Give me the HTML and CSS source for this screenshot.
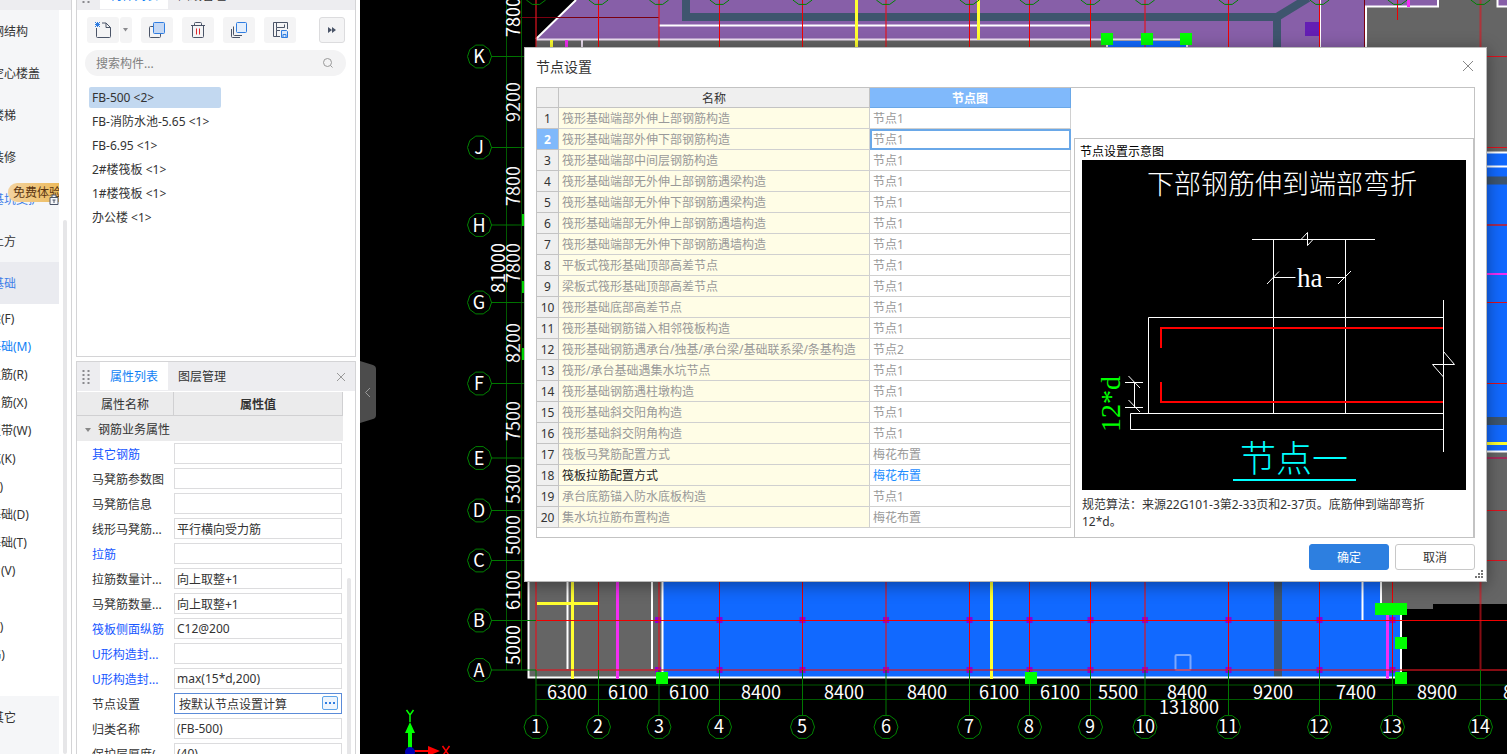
FILE: index.html
```html
<!DOCTYPE html>
<html lang="zh-CN">
<head>
    <meta charset="UTF-8">
    <meta name="viewport" content="width=device-width, initial-scale=1.0">
    <title>节点设置</title>
    <link rel="stylesheet" href="styles.css">
</head>
<body>
<div class="app">

    <nav class="nav">
        <div class="nav-top"></div>
        <ul class="nav-list">
            <li class="nav-group">钢结构</li>
            <li class="nav-group">空心楼盖</li>
            <li class="nav-group">楼梯</li>
            <li class="nav-group">装修</li>
            <li class="nav-group trial">基坑支护
                <span class="trial-badge">免费体验</span>
                <svg class="lock" width="10" height="11" viewBox="0 0 10 11"><path d="M1 3.500h8v7H1zM3 3.500V1h4v2.500" fill="#f5f6f8" stroke="#4b5568"/><path d="M3.500 6h3M5 6v3" stroke="#4b5568"/></svg>
            </li>
            <li class="nav-group">土方</li>
            <li class="nav-group current">基础</li>
        </ul>
        <ul class="nav-sub">
            <li>基础梁(F)</li>
            <li class="on">筏板基础(M)</li>
            <li>筏板主筋(R)</li>
            <li>筏板负筋(X)</li>
            <li>基础板带(W)</li>
            <li>集水坑(K)</li>
            <li>柱墩(Y)</li>
            <li>独立基础(D)</li>
            <li>条形基础(T)</li>
            <li>桩承台(V)</li>
            <li>桩(U)</li>
            <li>垫层(X)</li>
            <li>地沟(G)</li>
        </ul>
        <ul class="nav-list">
            <li class="nav-group">其它</li>
        </ul>
        <div class="nav-scroll"></div>
    </nav>

    <div class="side">
        <section class="panel panel-components">
            <header class="tabs">
                <svg class="grip" width="8" height="16" viewBox="0 0 8 16"><path d="M1.500 1v14M6.500 1v14" stroke="#8a8a8e" stroke-width="2" stroke-dasharray="2 2"/></svg>
                <button class="tab active">构件列表</button>
                <button class="tab">图纸管理</button>
                <button class="tab-close" aria-label="关闭"><svg width="10" height="10" viewBox="0 0 10 10"><path d="M1 1l8 8M9 1l-8 8" stroke="#999"/></svg></button>
            </header>
            <div class="toolbar">
                <button class="tool" aria-label="新建">
                    <svg width="18" height="18" viewBox="0 0 18 18" fill="none" stroke="#4b5568"><path d="M2.500 7v8.500q0 1 1 1h12q1 0 1-1V6.500L12 2H8M12 2v4.500h4.500"/><path d="M1 1l5 5M6 1L1 6M3.500 1v5M1 3.500h5" stroke="#2f7de1"/></svg>
                </button>
                <button class="tool tool-arrow" aria-label="更多新建"><svg width="6" height="4" viewBox="0 0 6 4"><path d="M0 0h5L2.500 3.500z" fill="#8a8a8e"/></svg></button>
                <button class="tool" aria-label="复制">
                    <svg width="18" height="18" viewBox="0 0 18 18" fill="none"><rect x="1.500" y="5.500" width="11" height="11" rx="1" stroke="#4b5568"/><rect x="5.500" y="1.500" width="11" height="11" rx="1" fill="#c5d8f4" stroke="#2f7de1"/></svg>
                </button>
                <button class="tool" aria-label="删除">
                    <svg width="18" height="18" viewBox="0 0 18 18" fill="none" stroke="#4b5568"><path d="M2 4.500h14M5.500 4.500v-2q0-1 1-1h5q1 0 1 1v2M3.500 4.500v11q0 1 1 1h9q1 0 1-1v-11"/><path d="M7.500 7.500v6M10.500 7.500v6" stroke="#e0272c"/></svg>
                </button>
                <button class="tool" aria-label="层间复制">
                    <svg width="18" height="18" viewBox="0 0 18 18" fill="none" stroke="#4b5568"><path d="M1.500 8v7.500q0 1 1 1H10M3.500 5.500v8q0 1 1 1H12"/><rect x="6.500" y="1.500" width="10" height="10" rx="1" fill="#e3eefc" stroke="#2f7de1"/></svg>
                </button>
                <button class="tool" aria-label="存档">
                    <svg width="18" height="18" viewBox="0 0 18 18" fill="none" stroke="#4b5568"><path d="M9 15.500H2.500v-14h14V8M5.500 15V9.500H9M5.500 1.500v5h8v-3M5.500 6.500v3"/><path d="M10.500 9.500h5l1 1v6h-6zM12 16v-2.500h3V16" stroke="#2f7de1" fill="#d8e8fb"/></svg>
                </button>
                <button class="tool tool-more" aria-label="展开"><svg width="10" height="8" viewBox="0 0 10 8"><path d="M1 1l4 3-4 3zM5 1l4 3-4 3z" fill="#4b5568"/></svg></button>
            </div>
            <div class="search">
                <input type="text" placeholder="搜索构件..." aria-label="搜索构件">
                <svg width="12" height="12" viewBox="0 0 12 12" fill="none" stroke="#999"><circle cx="5.500" cy="5.500" r="4"/><path d="M8.500 8.500l2 2"/></svg>
            </div>
            <ul class="components">
                <li class="selected">FB-500 &lt;2&gt;</li>
                <li>FB-消防水池-5.65 &lt;1&gt;</li>
                <li>FB-6.95 &lt;1&gt;</li>
                <li>2#楼筏板 &lt;1&gt;</li>
                <li>1#楼筏板 &lt;1&gt;</li>
                <li>办公楼 &lt;1&gt;</li>
            </ul>
        </section>

        <section class="panel panel-props">
            <header class="tabs">
                <svg class="grip" width="8" height="16" viewBox="0 0 8 16"><path d="M1.500 1v14M6.500 1v14" stroke="#8a8a8e" stroke-width="2" stroke-dasharray="2 2"/></svg>
                <button class="tab active">属性列表</button>
                <button class="tab">图层管理</button>
                <button class="tab-close" aria-label="关闭"><svg width="10" height="10" viewBox="0 0 10 10"><path d="M1 1l8 8M9 1l-8 8" stroke="#999"/></svg></button>
            </header>
            <table class="props">
                <thead>
                    <tr><th class="name">属性名称</th><th class="value">属性值</th></tr>
                </thead>
                <tbody>
                    <tr class="group"><td colspan="2"><svg width="6" height="4" viewBox="0 0 6 4"><path d="M0 0h6L3 4z" fill="#888"/></svg>钢筋业务属性</td></tr>
                    <tr><td class="blue"><label for="p1">其它钢筋</label></td><td><input id="p1" type="text"></td></tr>
                    <tr><td><label for="p2">马凳筋参数图</label></td><td><input id="p2" type="text"></td></tr>
                    <tr><td><label for="p3">马凳筋信息</label></td><td><input id="p3" type="text"></td></tr>
                    <tr><td><label for="p4">线形马凳筋...</label></td><td><input id="p4" type="text" value="平行横向受力筋"></td></tr>
                    <tr><td class="blue"><label for="p5">拉筋</label></td><td><input id="p5" type="text"></td></tr>
                    <tr><td><label for="p6">拉筋数量计...</label></td><td><input id="p6" type="text" value="向上取整+1"></td></tr>
                    <tr><td><label for="p7">马凳筋数量...</label></td><td><input id="p7" type="text" value="向上取整+1"></td></tr>
                    <tr><td class="blue"><label for="p8">筏板侧面纵筋</label></td><td><input id="p8" type="text" value="C12@200"></td></tr>
                    <tr><td class="blue"><label for="p9">U形构造封...</label></td><td><input id="p9" type="text"></td></tr>
                    <tr><td class="blue"><label for="p10">U形构造封...</label></td><td><input id="p10" type="text" value="max(15*d,200)"></td></tr>
                    <tr><td><label for="p11">节点设置</label></td><td class="editing"><input id="p11" type="text" value="按默认节点设置计算"><button class="dots" aria-label="节点设置"><svg width="10" height="2" viewBox="0 0 10 2"><path d="M0 1h10" stroke="#2f7de1" stroke-width="2" stroke-dasharray="2"/></svg></button></td></tr>
                    <tr><td><label for="p12">归类名称</label></td><td><input id="p12" type="text" value="(FB-500)"></td></tr>
                    <tr><td><label for="p13">保护层厚度(...</label></td><td><input id="p13" type="text" value="(40)"></td></tr>
                </tbody>
            </table>
            <div class="props-scroll"></div>
        </section>
    </div>

    <main class="canvas">
        <svg class="plan" viewBox="360 0 1147 754" preserveAspectRatio="xMinYMin slice">
            <defs>
                <polygon id="bubble" points="12,0 9.700,7 3.700,11.400 -3.700,11.400 -9.700,7 -12,0 -9.700,-7 -3.700,-11.400 3.700,-11.400 9.700,-7"/>
                <rect id="handle" x="-6" y="-6" width="12" height="12"/>
                <rect id="col" x="-3" y="-3" width="6" height="6"/>
            </defs>

            <!-- upper slab -->
            <rect x="536" y="39" width="660" height="20" fill="#656565"/>
            <polygon points="536,39 576,0 1366,0 1366,60 1188,60 1188,39" fill="#875fa8"/>
            <rect x="1366" y="0" width="141" height="604" fill="#656565"/>
            <rect x="1366" y="0" width="72" height="6" fill="#875fa8"/>
            <rect x="1498" y="0" width="9" height="6" fill="#875fa8"/>
            <path d="M1366 60V6.500H1438V0M1507 6.500H1497.500V0" fill="none" stroke="#fff" stroke-width="2"/>
            <path d="M1364.500 0v60" stroke="#7a0010"/>
            <rect x="1108" y="41" width="79" height="20" fill="#1169ff"/>
            <path d="M686 0V17H1277V60M1277 17L1308 -2" fill="none" stroke="#3e556e" stroke-width="8"/>
            <path d="M536 39L576 0M659 25.500h431" stroke="#fff" stroke-width="2" fill="none"/>
            <path d="M536 39.500h654M582 40v10M1107 40v10M1187 40v10" stroke="#eee0f2" stroke-width="2"/>
            <path d="M856.500 0v50M978.500 0v40M551.500 40v10" stroke="#ffff30" stroke-width="3"/>
            <path d="M566.500 40v10M1408.500 0v7" stroke="#f32df3" stroke-width="3"/>
            <path d="M520 17.500h139" stroke="#7a0010"/>
            <path d="M1320.500 0v50" stroke="#fff"/>
            <rect x="1305" y="22" width="14" height="14" fill="#641eb4"/>

            <!-- right strip -->
            <rect x="1480" y="153" width="27" height="298" fill="#1169ff"/>
            <path d="M1480 152.500h27M1480 166.500h27M1480 451.500h27" stroke="#fff" stroke-width="2"/>
            <path d="M1480 180.500h27M1480 421h27" stroke="#3e556e" stroke-width="8"/>
            <path d="M1480 274h27" stroke="#f32df3" stroke-width="2"/>
            <path d="M1480 443.500h27" stroke="#ffff30" stroke-width="3"/>
            <path d="M1480 225h27M1480 458h27" stroke="#a02d5a" stroke-width="2"/>
            <path d="M1480 56.500h27M1480 147.500h27M1480 302.500h27M1480 383.500h27M1480 510.500h27M1480 560.500h27" stroke="#e0101c"/>

            <!-- lower slab -->
            <rect x="1381" y="600" width="52" height="9" fill="#656565"/>
            <rect x="528" y="570" width="135" height="108" fill="#656565"/>
            <path d="M663 570H1381V608H1401V678H663z" fill="#1169ff"/>
            <path d="M1278 570v107" stroke="#3e556e" stroke-width="8"/>
            <path d="M528.500 570V677.500H1401V608M662.500 570V678" fill="none" stroke="#fff" stroke-width="2"/>
            <path d="M567.500 570v99M652 570v99M1362.500 570v50M1381 570v34" stroke="#fff" stroke-width="2"/>
            <path d="M572.500 570v109M537 603.500h62M991.500 570v109" stroke="#ffff30" stroke-width="3"/>
            <path d="M617.500 570v109M1387.500 612v67" stroke="#f32df3" stroke-width="3"/>
            <rect x="1175.500" y="655" width="15" height="15" rx="1" fill="none" stroke="#7aa8ff" stroke-width="2"/>

            <!-- columns -->
            <g fill="#8a00d8">
                <use href="#col" x="658" y="620"/><use href="#col" x="658" y="670"/>
                <use href="#col" x="719.500" y="620"/><use href="#col" x="719.500" y="670"/>
                <use href="#col" x="802.500" y="620"/><use href="#col" x="802.500" y="670"/>
                <use href="#col" x="886" y="620"/><use href="#col" x="886" y="670"/>
                <use href="#col" x="969.500" y="620"/><use href="#col" x="969.500" y="670"/>
                <use href="#col" x="1029.500" y="620"/><use href="#col" x="1029.500" y="670"/>
                <use href="#col" x="1090.500" y="620"/><use href="#col" x="1090.500" y="670"/>
                <use href="#col" x="1145" y="620"/><use href="#col" x="1145" y="670"/>
                <use href="#col" x="1228.500" y="620"/><use href="#col" x="1228.500" y="670"/>
                <use href="#col" x="1319.500" y="620"/><use href="#col" x="1319.500" y="670"/>
                <use href="#col" x="1392.500" y="620"/><use href="#col" x="1392.500" y="670"/>
            </g>

            <!-- red grid -->
            <path d="M598.500 0v670M719.500 0v670M802.500 0v670M969.500 0v670M1029.500 0v670M1090.500 0v670M1228.500 0v670M1319.500 0v670M1397.500 0v20M1392.500 570v100M536 620.500h971" stroke="#f00000"/>
            <path d="M536 0v670M659 0v670M886 0v670M1145 0v670M1480.500 0v670M536 670h971" stroke="#e01420" stroke-opacity=".6" stroke-width="2"/>

            <!-- axis lines -->
            <path d="M506.500 0v670M521.500 0v670M536 685h971M536 699.500h971" stroke="#005a00"/>
            <path d="M491 56.500h45M491 147.500h45M491 225h45M491 302.500h45M491 383.500h45M491 458h45M491 510.500h45M491 560.500h45M491 620.500h45M491 670h45" stroke="#007800"/>
            <path d="M536 670v45M598.500 670v45M659 670v45M719.500 670v45M802.500 670v45M886 670v45M969.500 670v45M1029.500 670v45M1090.500 670v45M1145 670v45M1228.500 670v45M1319.500 670v45M1392.500 670v45M1480.500 670v45" stroke="#007800"/>
            <g fill="none" stroke="#008200">
                <use href="#bubble" x="536" y="-7"/><use href="#bubble" x="598.500" y="-7"/><use href="#bubble" x="659" y="-7"/><use href="#bubble" x="719.500" y="-7"/><use href="#bubble" x="802.500" y="-7"/><use href="#bubble" x="886" y="-7"/><use href="#bubble" x="969.500" y="-7"/><use href="#bubble" x="1029.500" y="-7"/><use href="#bubble" x="1090.500" y="-7"/><use href="#bubble" x="1145" y="-7"/><use href="#bubble" x="1228.500" y="-7"/><use href="#bubble" x="1319.500" y="-7"/><use href="#bubble" x="1397.500" y="-7"/><use href="#bubble" x="1480.500" y="-7"/>
                <use href="#bubble" x="479.500" y="56.500"/><use href="#bubble" x="479.500" y="147.500"/><use href="#bubble" x="479.500" y="225"/><use href="#bubble" x="479.500" y="302.500"/><use href="#bubble" x="479.500" y="383.500"/><use href="#bubble" x="479.500" y="458"/><use href="#bubble" x="479.500" y="510.500"/><use href="#bubble" x="479.500" y="560.500"/><use href="#bubble" x="479.500" y="620.500"/><use href="#bubble" x="479.500" y="670"/>
                <use href="#bubble" x="536" y="727"/><use href="#bubble" x="598.500" y="727"/><use href="#bubble" x="659" y="727"/><use href="#bubble" x="719.500" y="727"/><use href="#bubble" x="802.500" y="727"/><use href="#bubble" x="886" y="727"/><use href="#bubble" x="969.500" y="727"/><use href="#bubble" x="1029.500" y="727"/><use href="#bubble" x="1090.500" y="727"/><use href="#bubble" x="1145" y="727"/><use href="#bubble" x="1228.500" y="727"/><use href="#bubble" x="1319.500" y="727"/><use href="#bubble" x="1392.500" y="727"/><use href="#bubble" x="1480.500" y="727"/>
            </g>

            <g class="axis-text">
                <text x="479" y="63">K</text><text x="479" y="154">J</text><text x="479" y="232">H</text><text x="479" y="309">G</text><text x="479" y="390">F</text><text x="479" y="465">E</text><text x="479" y="517">D</text><text x="479" y="567">C</text><text x="479" y="627">B</text><text x="479" y="677">A</text>
                <text x="536" y="733">1</text><text x="598" y="733">2</text><text x="659" y="733">3</text><text x="719" y="733">4</text><text x="802" y="733">5</text><text x="886" y="733">6</text><text x="969" y="733">7</text><text x="1029" y="733">8</text><text x="1090" y="733">9</text><text x="1145" y="733">10</text><text x="1228" y="733">11</text><text x="1319" y="733">12</text><text x="1392" y="733">13</text><text x="1480" y="733">14</text>
                <text x="567" y="699">6300</text><text x="628" y="699">6100</text><text x="689" y="699">6100</text><text x="761" y="699">8400</text><text x="844" y="699">8400</text><text x="927" y="699">8400</text><text x="999" y="699">6100</text><text x="1060" y="699">6100</text><text x="1118" y="699">5500</text><text x="1187" y="699">8400</text><text x="1273" y="699">9200</text><text x="1356" y="699">7400</text><text x="1437" y="699">8900</text><text x="1523" y="699">8400</text>
                <text x="1189" y="714">131800</text>
                <text transform="translate(520 17) rotate(-90)">7800</text>
                <text transform="translate(520 102) rotate(-90)">9200</text>
                <text transform="translate(520 186) rotate(-90)">7800</text>
                <text transform="translate(520 263) rotate(-90)">7800</text>
                <text transform="translate(520 343) rotate(-90)">8200</text>
                <text transform="translate(520 421) rotate(-90)">7500</text>
                <text transform="translate(520 484) rotate(-90)">5300</text>
                <text transform="translate(520 535) rotate(-90)">5000</text>
                <text transform="translate(520 590) rotate(-90)">6100</text>
                <text transform="translate(520 645) rotate(-90)">5000</text>
                <text transform="translate(505 268) rotate(-90)">81000</text>
            </g>

            <!-- grips of the selected slab -->
            <g fill="#00ff00">
                <use href="#handle" x="1107" y="39"/><use href="#handle" x="1147" y="39"/><use href="#handle" x="1186" y="39"/>
                <use href="#handle" x="662" y="678"/><use href="#handle" x="1031" y="678"/><use href="#handle" x="1401" y="678"/><use href="#handle" x="1401" y="643"/>
                <rect x="1375" y="603" width="32" height="12"/>
                <use href="#handle" x="528" y="220"/><use href="#handle" x="528" y="287"/><use href="#handle" x="528" y="354"/>
            </g>

            <!-- ucs icon -->
            <path d="M408 748V733h-3l5-11 5 11h-3v15z" fill="#00ff00"/>
            <path d="M414 750h14v-4l12 5-12 5v-4h-14z" fill="#ff0000"/>
            <circle cx="410" cy="752" r="5" fill="#0000b4"/>
            <path d="M406.500 710l3.500 5 3.500-5M410 715v7" fill="none" stroke="#00ff00" stroke-width="1.500"/>
            <path d="M442.500 746l7 10M449.500 746l-7 10" stroke="#ff0000" stroke-width="1.500"/>
        </svg>
        <button class="collapse" aria-label="收起">
            <svg width="16" height="62" viewBox="0 0 16 62"><path d="M0 0l13 4q3 1 3 4v46q0 3-3 4L0 62z" fill="#4c4c4c"/><path d="M10 27l-4.500 4.500L10 36" fill="none" stroke="#999"/></svg>
        </button>
    </main>
</div>

<div class="dialog" role="dialog" aria-labelledby="dialogTitle">
    <header class="dialog-head">
        <h1 id="dialogTitle">节点设置</h1>
        <button class="dialog-close" aria-label="关闭"><svg width="12" height="12" viewBox="0 0 12 12"><path d="M1 1l10 10M11 1L1 11" stroke="#888"/></svg></button>
    </header>
    <div class="dialog-body">
        <table class="nodes">
            <thead>
                <tr><th class="num"></th><th>名称</th><th class="pic">节点图</th></tr>
            </thead>
            <tbody>
                <tr><th>1</th><td>筏形基础端部外伸上部钢筋构造</td><td>节点1</td></tr>
                <tr class="active"><th>2</th><td>筏形基础端部外伸下部钢筋构造</td><td>节点1</td></tr>
                <tr><th>3</th><td>筏形基础端部中间层钢筋构造</td><td>节点1</td></tr>
                <tr><th>4</th><td>筏形基础端部无外伸上部钢筋遇梁构造</td><td>节点1</td></tr>
                <tr><th>5</th><td>筏形基础端部无外伸下部钢筋遇梁构造</td><td>节点1</td></tr>
                <tr><th>6</th><td>筏形基础端部无外伸上部钢筋遇墙构造</td><td>节点1</td></tr>
                <tr><th>7</th><td>筏形基础端部无外伸下部钢筋遇墙构造</td><td>节点1</td></tr>
                <tr><th>8</th><td>平板式筏形基础顶部高差节点</td><td>节点1</td></tr>
                <tr><th>9</th><td>梁板式筏形基础顶部高差节点</td><td>节点1</td></tr>
                <tr><th>10</th><td>筏形基础底部高差节点</td><td>节点1</td></tr>
                <tr><th>11</th><td>筏形基础钢筋锚入相邻筏板构造</td><td>节点1</td></tr>
                <tr><th>12</th><td>筏形基础钢筋遇承台/独基/承台梁/基础联系梁/条基构造</td><td>节点2</td></tr>
                <tr><th>13</th><td>筏形/承台基础遇集水坑节点</td><td>节点1</td></tr>
                <tr><th>14</th><td>筏形基础钢筋遇柱墩构造</td><td>节点1</td></tr>
                <tr><th>15</th><td>筏形基础斜交阳角构造</td><td>节点1</td></tr>
                <tr><th>16</th><td>筏形基础斜交阴角构造</td><td>节点1</td></tr>
                <tr><th>17</th><td>筏板马凳筋配置方式</td><td>梅花布置</td></tr>
                <tr class="enabled"><th>18</th><td>筏板拉筋配置方式</td><td>梅花布置</td></tr>
                <tr><th>19</th><td>承台底筋锚入防水底板构造</td><td>节点1</td></tr>
                <tr><th>20</th><td>集水坑拉筋布置构造</td><td>梅花布置</td></tr>
            </tbody>
        </table>
        <section class="preview">
            <h2>节点设置示意图</h2>
            <svg class="detail" viewBox="0 0 384 330">
                <rect width="384" height="330" fill="#000"/>
                <text x="65" y="34" font-size="27" fill="#fff">下部钢筋伸到端部弯折</text>
                <g fill="none" stroke="#fff">
                    <path d="M170 79.500h123M219 79.500l6.500-7v13l5.500-6M191.500 80v173M263.500 80v173"/>
                    <path d="M191.500 117.500h22M244 117.500h19.500M185 124l12-12.500M256 124l13-13"/>
                    <path d="M361.500 157.500h-295V253.500M361.500 253.500h-313v16h313M361.500 140v152"/>
                    <path d="M361.500 191.500l11 13h-22l11 12.500"/>
                    <path d="M43 222.500h18M43 247.500h18M52.500 222v26M46.500 216l11.500 12M46.500 240l11.500 12"/>
                </g>
                <path d="M361 168H79v20M79 222v20H361" fill="none" stroke="#ff0000" stroke-width="2"/>
                <text class="serif" x="215" y="127" font-size="27" fill="#fff">ha</text>
                <text class="serif" transform="translate(38 272) rotate(-90)" font-size="28" fill="#00ff00">12*d</text>
                <text x="158" y="312" font-size="36" fill="#00ffff">节点一</text>
                <path d="M151 320h123" stroke="#00ffff" stroke-width="2"/>
            </svg>
            <p>规范算法：来源22G101-3第2-33页和2-37页。底筋伸到端部弯折12*d。</p>
        </section>
    </div>
    <footer class="dialog-foot">
        <button class="btn primary">确定</button>
        <button class="btn">取消</button>
    </footer>
    <svg class="resize" width="8" height="8" viewBox="0 0 8 8"><path d="M6 0h2v2H6zM3 3h2v2H3zM6 3h2v2H6zM0 6h2v2H0zM3 6h2v2H3zM6 6h2v2H6z" fill="#777"/></svg>
</div>
</body>
</html>
```
FILE: styles.css
```css
* {
    box-sizing: border-box;
}
body {
    margin: 0;
    height: 100vh;
    overflow: hidden;
    font-family: "Noto Sans", "Noto Sans CJK SC", sans-serif;
    font-size: 12px;
    color: #333;
    background: #fff;
}
ul {
    list-style: none;
    margin: 0;
    padding: 0;
}
button, input {
    font: inherit;
    color: inherit;
    margin: 0;
    padding: 0;
    border: 0;
    background: none;
}
svg {
    display: block;
}
.app {
    display: flex;
    height: 100vh;
}

/* left navigation */
.nav {
    position: relative;
    width: 72px;
    flex: none;
    overflow: hidden;
    white-space: nowrap;
    border-right: 1px solid #d4d4d6;
}
.nav-top {
    height: 10px;
    background: #ededf0;
}
.nav-list {
    width: 59px;
    background: #f5f6f8;
}
.nav-group {
    position: relative;
    height: 42px;
    line-height: 44px;
    text-indent: -8px;
}
.nav-group.current {
    background: #eaebf0;
    color: #3f7fe8;
}
.nav-group.trial {
    color: #3f7fe8;
}
.trial-badge {
    position: absolute;
    left: 8px;
    top: 5px;
    width: 51px;
    height: 19px;
    line-height: 20px;
    border-radius: 9px 0 0 9px;
    background: linear-gradient(90deg, #f3d3a0, #edbb5c);
    color: #5a3510;
    text-indent: 5px;
    overflow: hidden;
}
.lock {
    position: absolute;
    left: 49px;
    top: 16px;
}
.nav-sub {
    padding: 1px 0 27px;
}
.nav-sub li {
    height: 28px;
    line-height: 28px;
    text-indent: -35px;
}
.nav-sub .on {
    color: #0f7ff5;
}
.nav-list:last-of-type {
    height: 60px;
}
.nav-scroll {
    position: absolute;
    left: 63px;
    top: 220px;
    bottom: 0;
    width: 4px;
    border-radius: 2px;
    background: #e6e6e8;
}

/* docked panels */
.side {
    display: flex;
    flex-direction: column;
    gap: 4px;
    width: 288px;
    flex: none;
    padding: 0 4px;
    overflow: hidden;
}
.panel {
    position: relative;
    border: 1px solid #d4d4d6;
    background: #fff;
    flex: none;
}
.panel-components {
    height: 377px;
    margin-top: -20px;
}
.tabs {
    display: flex;
    align-items: center;
    height: 29px;
    padding: 0 9px 0 5px;
    background: #ededf0;
}
.grip {
    margin-right: 10px;
}
.tab {
    height: 28px;
    padding: 0 10px;
    align-self: flex-start;
}
.tab.active {
    background: #fff;
    color: #0f7ff5;
}
.tab-close {
    margin-left: auto;
}
.toolbar {
    display: flex;
    gap: 9px;
    padding: 7px 10px 0;
}
.tool {
    display: flex;
    align-items: center;
    justify-content: center;
    width: 32px;
    height: 26px;
    border-radius: 3px;
    background: #f4f4f5;
}
.tool-arrow {
    width: 12px;
    margin-left: -8px;
}
.tool-more {
    width: 26px;
    margin-left: auto;
    border: 1px solid #dcdcde;
}
.search {
    display: flex;
    align-items: center;
    height: 26px;
    margin: 7px 9px 11px 8px;
    padding: 0 12px 0 11px;
    border-radius: 13px;
    background: #f3f3f4;
}
.search input {
    flex: 1;
    min-width: 0;
}
.search input::placeholder {
    color: #808080;
    opacity: 1;
}
.components li {
    width: 132px;
    height: 21px;
    line-height: 21px;
    margin: 0 0 3px 12px;
    padding-left: 3px;
    border-radius: 2px;
    white-space: nowrap;
}
.components .selected {
    background: #c2d8f0;
}

/* property table */
.props {
    width: 266px;
    margin-top: 1px;
    border-spacing: 0;
    table-layout: fixed;
}
.props th {
    height: 24px;
    padding: 0;
    background: #ebebec;
    border-right: 1px solid #d0d0d2;
    border-bottom: 1px solid #d0d0d2;
}
.props .name {
    width: 97px;
    font-weight: normal;
}
.props td {
    height: 25px;
    padding: 0 0 0 15px;
    white-space: nowrap;
}
.props td + td {
    position: relative;
    padding: 0 1px 0 0;
}
.props .group td {
    background: #ebebec;
    padding-left: 8px;
}
.props .group svg {
    display: inline-block;
    margin-right: 7px;
    vertical-align: middle;
}
.props .blue {
    color: #1757ff;
}
.props input {
    display: block;
    width: 100%;
    height: 21px;
    padding: 0 2px;
    border: 1px solid #dcdcde;
    background: #fff;
}
.props .editing input {
    border-color: #5b8bd8;
    padding-left: 4px;
}
.dots {
    position: absolute;
    right: 5px;
    top: 5px;
    display: flex;
    align-items: center;
    justify-content: center;
    width: 16px;
    height: 14px;
    border: 1px solid #5fa4e8;
    border-radius: 2px;
    background: #eef5fd;
}
.props-scroll {
    position: absolute;
    right: 4px;
    top: 216px;
    bottom: 0;
    width: 4px;
    border-radius: 2px;
    background: #e6e6e8;
}

/* drawing area */
.canvas {
    position: relative;
    flex: 1;
    min-width: 0;
    overflow: hidden;
    background: #000;
}
.plan {
    width: 100%;
    height: 100%;
}
.axis-text {
    font-family: "Noto Sans CJK SC", sans-serif;
    font-size: 18px;
    fill: #fff;
    text-anchor: middle;
}
.collapse {
    position: absolute;
    left: 0;
    top: 361px;
}

/* dialog */
.dialog {
    position: absolute;
    left: 524px;
    top: 47px;
    right: 20px;
    border: 1px solid #b9b9b9;
    background: #fff;
    box-shadow: 0 3px 16px rgba(0, 0, 0, .4);
}
.dialog-head {
    display: flex;
    align-items: center;
    justify-content: space-between;
    height: 39px;
    padding: 0 12px 3px 11px;
}
.dialog-head h1 {
    margin: 0;
    font-size: 14px;
    font-weight: normal;
}
.dialog-body {
    display: flex;
    align-items: flex-start;
    gap: 3px;
    height: 451px;
    margin: 0 11px;
    border: 1px solid #c3c3c3;
}
.nodes {
    width: 534px;
    flex: none;
    border-spacing: 0;
    table-layout: fixed;
}
.nodes th, .nodes td {
    height: 21px;
    padding: 2px 0 0;
    line-height: 18px;
    border-right: 1px solid #d0d0d0;
    border-bottom: 1px solid #d0d0d0;
    white-space: nowrap;
}
.nodes th {
    background: #efefef;
    font-weight: normal;
    border-color: #c3c3c3;
}
.nodes thead th {
    height: 20px;
    line-height: 17px;
}
.nodes .num {
    width: 22px;
}
.nodes .pic {
    width: 201px;
    background: #80b9fb;
    border-color: #6aa8e8;
    color: #fff;
    font-weight: bold;
}
.nodes td {
    padding-left: 3px;
    color: #999;
}
.nodes td:nth-child(2) {
    background: #fffde6;
}
.nodes .active th {
    background: #80b9fb;
    color: #fff;
    font-weight: bold;
}
.nodes .active td:last-child {
    outline: 2px solid #6aa8e8;
    outline-offset: -2px;
}
.nodes .enabled td {
    color: #222;
}
.nodes .enabled td:last-child {
    color: #1a8cff;
}
.preview {
    flex: 1;
    align-self: stretch;
    min-width: 0;
    margin-top: 50px;
    padding: 5px 7px 0;
    border: 1px solid #c3c3c3;
    border-width: 1px 1px 0 1px;
}
.preview h2 {
    margin: 0 0 0 -2px;
    font-size: 12px;
    line-height: 16px;
    font-weight: normal;
    color: #000;
}
.preview p {
    margin: 6px 0 0;
    padding-right: 16px;
    line-height: 17px;
}
.detail {
    width: 100%;
    font-family: "Noto Sans CJK SC", sans-serif;
    font-weight: 300;
}
.detail .serif {
    font-family: "Liberation Serif", serif;
}
.dialog-foot {
    display: flex;
    justify-content: flex-end;
    gap: 6px;
    padding: 6px 11px 11px;
}
.btn {
    width: 80px;
    height: 26px;
    border: 1px solid #c8c8c8;
    border-radius: 3px;
    background: #fff;
}
.btn.primary {
    background: #2d7fe0;
    border-color: #2d7fe0;
    color: #fff;
}
.resize {
    position: absolute;
    right: 3px;
    bottom: 3px;
}
```
